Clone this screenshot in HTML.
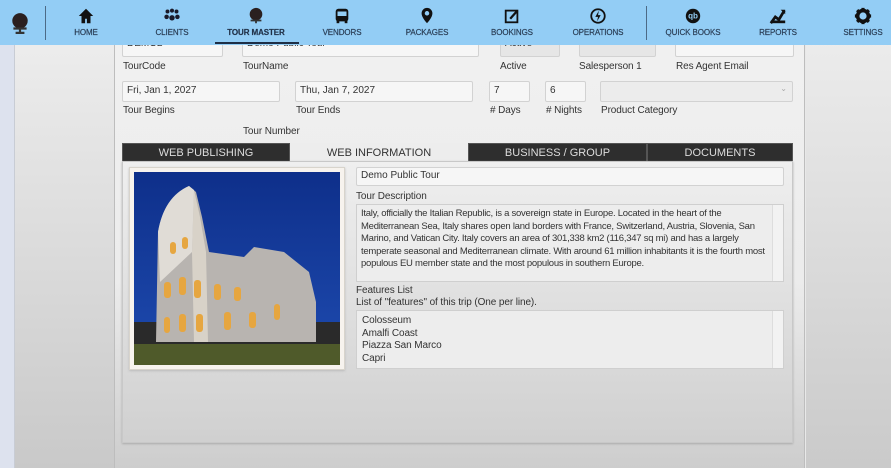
<!DOCTYPE html>
<html><head><meta charset="utf-8"><style>
*{box-sizing:border-box;margin:0;padding:0}
body{width:891px;height:468px;overflow:hidden;position:relative;font-family:"Liberation Sans",sans-serif;background:#e8e8e8;color:#222}
.abs{position:absolute}
.strip{left:0;top:0;width:15px;height:468px;background:#dde2ee;border-right:1px solid #c8ccd4}
.side{left:15px;top:0;width:100px;height:468px;background:linear-gradient(#f0f0f0,#c9c9c9);border-right:1px solid #bdbdbd}
.main{left:115px;top:0;width:690px;height:468px;background:linear-gradient(#f1f1f1 0%,#ececec 60%,#cdcdcd 100%);border-right:1px solid #bdbdbd}
.right{left:806px;top:0;width:85px;height:468px;background:linear-gradient(#efefef,#cacaca)}
.nav{left:0;top:0;width:891px;height:45px;background:#93cdf5}
.ni{position:absolute;top:0;width:90px;margin-left:-45px;text-align:center}
.ni svg{display:block;margin:7px auto 0;width:20px;height:18px}
.ni span{display:block;font-size:8px;color:#2b3f57;margin-top:3px;letter-spacing:-0.1px;-webkit-text-stroke:0.2px #2b3f57}
.sep{position:absolute;top:6px;width:1px;height:34px;background:#4c6a86}
.f{position:absolute;background:#f6f6f6;border:1px solid #d2d2d2;border-radius:2px;font-size:10px;padding:3px 4px;color:#333;height:21px}
.l{position:absolute;font-size:10px;color:#333;letter-spacing:-0.1px}
.tab{position:absolute;top:143px;height:19px;font-size:11px;text-align:center;line-height:19px;color:#ddd;background:#2e2e2e;border:1px solid #555}
.tab.on{background:#ededed;color:#333;border-color:#ededed}
.panel{left:122px;top:161px;width:671px;height:282px;background:linear-gradient(#efefef,#d0d0d0);border:1px solid #c8c8c8;box-shadow:0 1px 2px #aaa}
.ta{position:absolute;background:#ededed;border:1px solid #cfcfcf;font-size:9.5px;letter-spacing:-0.25px;line-height:12.5px;padding:3px 16px 4px 4px;color:#333}
.sb{position:absolute;right:0;top:0;bottom:0;width:11px;border-left:1px solid #ddd;background:#f2f2f2}
</style></head><body>
<div class="abs strip"></div><div class="abs side"></div><div class="abs main"></div><div class="abs right"></div>

<div class="f" style="left:122px;top:37px;width:101px;height:20px;padding-top:0">DEMO2</div>
<div class="f" style="left:242px;top:37px;width:237px;height:20px;padding-top:0">Demo Public Tour</div>
<div class="f" style="left:500px;top:37px;width:60px;height:20px;padding-top:0;background:#e6e6e6">Active</div>
<div class="f" style="left:579px;top:37px;width:77px;height:20px;background:#e6e6e6"></div>
<div class="f" style="left:675px;top:37px;width:119px;height:20px"></div>
<div class="l" style="left:123px;top:61px">TourCode</div>
<div class="l" style="left:243px;top:61px">TourName</div>
<div class="l" style="left:500px;top:61px">Active</div>
<div class="l" style="left:579px;top:61px">Salesperson 1</div>
<div class="l" style="left:676px;top:61px">Res Agent Email</div>

<div class="f" style="left:122px;top:81px;width:158px">Fri, Jan 1, 2027</div>
<div class="f" style="left:295px;top:81px;width:178px">Thu, Jan 7, 2027</div>
<div class="f" style="left:489px;top:81px;width:41px">7</div>
<div class="f" style="left:545px;top:81px;width:41px">6</div>
<div class="f" style="left:600px;top:81px;width:193px;background:#ececec"><span style="position:absolute;right:5px;top:2px;font-size:8px;color:#aaa">⌄</span></div>
<div class="l" style="left:123px;top:105px">Tour Begins</div>
<div class="l" style="left:296px;top:105px">Tour Ends</div>
<div class="l" style="left:490px;top:105px"># Days</div>
<div class="l" style="left:546px;top:105px"># Nights</div>
<div class="l" style="left:601px;top:105px">Product Category</div>
<div class="l" style="left:243px;top:126px">Tour Number</div>

<div class="tab" style="left:122px;width:168px">WEB PUBLISHING</div>
<div class="tab on" style="left:290px;width:178px">WEB INFORMATION</div>
<div class="tab" style="left:468px;width:179px">BUSINESS / GROUP</div>
<div class="tab" style="left:647px;width:146px">DOCUMENTS</div>
<div class="abs panel"></div>

<div class="abs" style="left:129px;top:167px;width:216px;height:203px;background:#f7f3ee;border:1px solid #d8d4cc;box-shadow:0 1px 2px #bbb"></div>
<svg class="abs" style="left:134px;top:172px" width="206" height="193" viewBox="0 0 206 193">
<defs><linearGradient id="sky" x1="0" y1="0" x2="0" y2="1"><stop offset="0" stop-color="#0e2f8a"/><stop offset="1" stop-color="#1e4bb0"/></linearGradient></defs>
<rect width="206" height="193" fill="url(#sky)"/>
<rect y="150" width="206" height="43" fill="#2a2a2a"/>
<path d="M22 170 L24 60 Q30 25 55 14 L62 20 L68 45 L75 80 L110 85 L120 75 L150 80 L175 100 L182 130 L182 170 Z" fill="#b8b4b0"/>
<path d="M60 18 L66 45 L72 80 L74 170 L60 170 L58 80 Z" fill="#d8d2c8"/>
<path d="M24 60 Q30 25 55 14 L60 18 L58 80 L26 110 Z" fill="#e0dcd6"/>
<g fill="#e6a640">
<rect x="36" y="70" width="6" height="12" rx="3"/><rect x="48" y="65" width="6" height="12" rx="3"/>
<rect x="30" y="110" width="7" height="16" rx="3"/><rect x="45" y="105" width="7" height="18" rx="3"/><rect x="60" y="108" width="7" height="18" rx="3"/><rect x="80" y="112" width="7" height="16" rx="3"/><rect x="100" y="115" width="7" height="14" rx="3"/>
<rect x="30" y="145" width="6" height="16" rx="3"/><rect x="45" y="142" width="7" height="18" rx="3"/><rect x="62" y="142" width="7" height="18" rx="3"/><rect x="90" y="140" width="7" height="18" rx="3"/><rect x="115" y="140" width="7" height="16" rx="3"/><rect x="140" y="132" width="6" height="16" rx="3"/>
</g>
<rect y="172" width="206" height="21" fill="#4f5a2a"/>
</svg>

<div class="f" style="left:356px;top:167px;width:428px;height:19px;padding-top:2px">Demo Public Tour</div>
<div class="l" style="left:356px;top:191px">Tour Description</div>
<div class="ta" style="left:356px;top:204px;width:428px;height:78px">Italy, officially the Italian Republic, is a sovereign state in Europe. Located in the heart of the Mediterranean Sea, Italy shares open land borders with France, Switzerland, Austria, Slovenia, San Marino, and Vatican City. Italy covers an area of 301,338 km2 (116,347 sq mi) and has a largely temperate seasonal and Mediterranean climate. With around 61 million inhabitants it is the fourth most populous EU member state and the most populous in southern Europe.<div class="sb"></div></div>
<div class="l" style="left:356px;top:285px">Features List</div>
<div class="l" style="left:356px;top:297px">List of "features" of this trip (One per line).</div>
<div class="ta" style="left:356px;top:310px;width:428px;height:59px;font-size:10px;letter-spacing:-0.1px;padding:4px 16px 4px 5px">Colosseum<br>Amalfi Coast<br>Piazza San Marco<br>Capri<div class="sb"></div></div>

<div class="abs nav">
<div class="ni" style="left:20px"><svg viewBox="0 0 20 20" style="width:22px;height:24px;margin-top:11px"><circle cx="10" cy="8" r="7" fill="#2a2020"/><path d="M4 15h12M10 15v3M6 19h8" stroke="#333" stroke-width="2"/></svg></div>
<div class="sep" style="left:45px"></div>
<div class="ni" style="left:86px"><svg viewBox="0 0 20 20"><path d="M10 2L2 10h3v8h4v-5h2v5h4v-8h3z" fill="#111"/></svg><span>HOME</span></div>
<div class="ni" style="left:172px"><svg viewBox="0 0 20 20"><g fill="#1a1a2a"><circle cx="5" cy="5" r="2.2"/><circle cx="10" cy="4" r="2.2"/><circle cx="15" cy="5" r="2.2"/><circle cx="4" cy="11" r="2.5"/><circle cx="16" cy="11" r="2.5"/><circle cx="10" cy="12" r="3"/></g></svg><span>CLIENTS</span></div>
<div class="ni" style="left:256px"><svg viewBox="0 0 20 20"><circle cx="10" cy="8" r="7" fill="#2a2020"/><path d="M4 15h12M10 15v3" stroke="#333" stroke-width="2"/></svg><span style="font-weight:bold;color:#1e2e45">TOUR MASTER</span></div>
<div class="ni" style="left:342px"><svg viewBox="0 0 20 20"><rect x="3" y="2" width="14" height="14" rx="3" fill="#111"/><rect x="5" y="5" width="10" height="5" fill="#93cdf5"/><rect x="4" y="15" width="3" height="3" fill="#111"/><rect x="13" y="15" width="3" height="3" fill="#111"/></svg><span>VENDORS</span></div>
<div class="ni" style="left:427px"><svg viewBox="0 0 20 20"><path d="M10 1a6 6 0 0 0-6 6c0 5 6 11 6 11s6-6 6-11a6 6 0 0 0-6-6z" fill="#111"/><circle cx="10" cy="7" r="2.5" fill="#93cdf5"/></svg><span>PACKAGES</span></div>
<div class="ni" style="left:512px"><svg viewBox="0 0 20 20"><rect x="3" y="4" width="13" height="13" fill="none" stroke="#111" stroke-width="2"/><path d="M8 13l8-9" stroke="#111" stroke-width="2.5"/></svg><span>BOOKINGS</span></div>
<div class="ni" style="left:598px"><svg viewBox="0 0 20 20"><circle cx="10" cy="10" r="7.5" fill="none" stroke="#111" stroke-width="2"/><path d="M11 4L7 11h3l-1 5 4-7h-3z" fill="#111"/></svg><span>OPERATIONS</span></div>
<div class="sep" style="left:646px"></div>
<div class="ni" style="left:693px"><svg viewBox="0 0 20 20"><circle cx="10" cy="10" r="8" fill="#111"/><text x="10" y="13" font-size="9" fill="#93cdf5" text-anchor="middle" font-family="Liberation Sans" font-weight="bold">qb</text></svg><span>QUICK BOOKS</span></div>
<div class="ni" style="left:778px"><svg viewBox="0 0 20 20"><path d="M2 18l5-7 4 3 6-10" stroke="#111" stroke-width="3" fill="none"/><path d="M13 3h5v5z" fill="#111"/><rect x="2" y="15" width="16" height="3" fill="#111"/></svg><span>REPORTS</span></div>
<div class="ni" style="left:863px"><svg viewBox="0 0 20 20"><circle cx="10" cy="10" r="6" fill="none" stroke="#111" stroke-width="4"/><g stroke="#111" stroke-width="3.5"><path d="M10 1v4M10 15v4M1 10h4M15 10h4M3.5 3.5l3 3M13.5 13.5l3 3M16.5 3.5l-3 3M6.5 13.5l-3 3"/></g></svg><span>SETTINGS</span></div>
<div class="abs" style="left:215px;top:42px;width:84px;height:2px;background:#1e2e45"></div>
</div>
</body></html>
